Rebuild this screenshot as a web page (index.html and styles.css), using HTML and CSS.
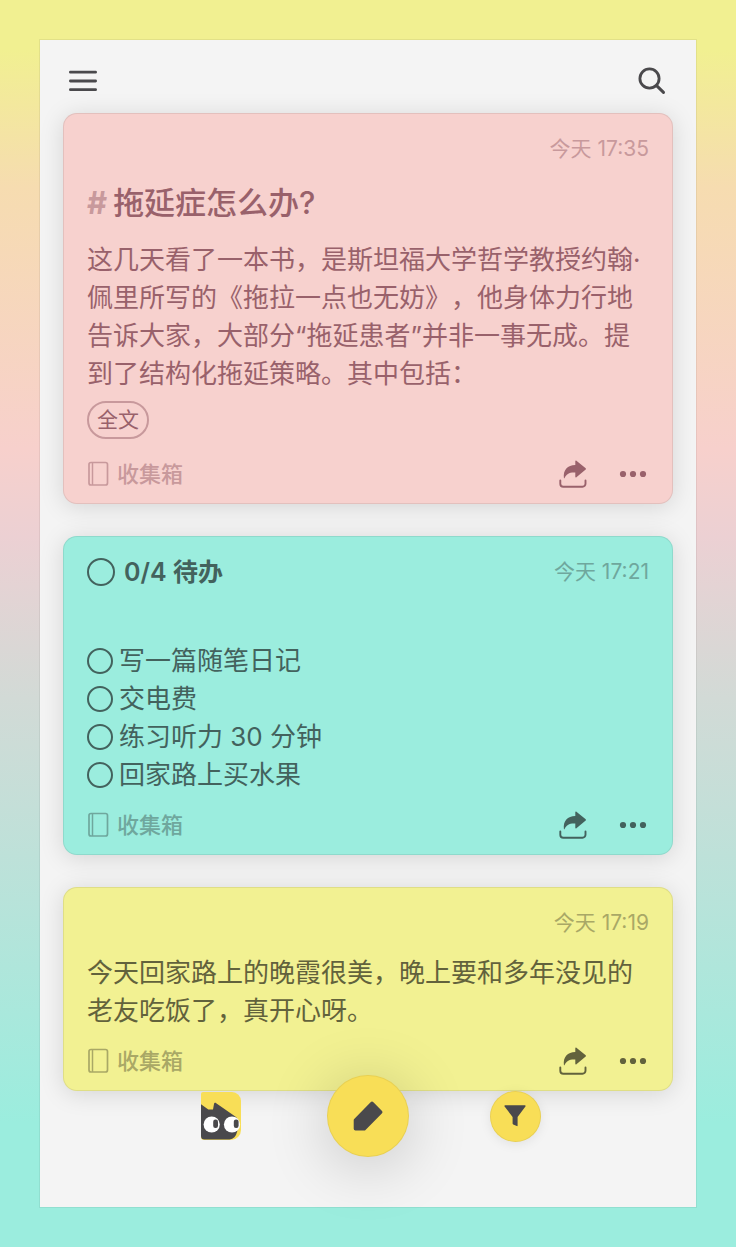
FILE: index.html
```html
<!DOCTYPE html>
<html lang="zh-CN">
<head>
    <meta charset="UTF-8">
    <meta name="viewport" content="width=device-width, initial-scale=1.0">
    <title>收集箱</title>
    <link rel="stylesheet" href="styles.css">
</head>
<body>
    <!-- 公用图标 -->
    <svg class="sprite" aria-hidden="true">
        <symbol id="icon-book" viewBox="0 0 22 26">
            <rect x="2" y="1.500" width="18.500" height="22.500" rx="2" fill="none" stroke="currentColor" stroke-width="1.700"/>
            <path d="M5.500 1.500v22.500" fill="none" stroke="currentColor" stroke-width="1.500"/>
        </symbol>
        <symbol id="icon-share" viewBox="0 0 28 28">
            <path d="M16.300 1.300c0-.7.6-.9 1.100-.5l9.300 7.400c.4.4.4.9 0 1.300l-9.300 7.800c-.5.4-1.100.2-1.100-.5V12.500C10.500 12.100 7.300 14 5.600 18.100c-.2.4-.6.3-.7-.1C4 10 8.500 5.100 16.300 5z" fill="currentColor"/>
            <path d="M1.300 20.500v3.300a3 3 0 0 0 3 3h19.200a3 3 0 0 0 3-3v-3.300" fill="none" stroke="currentColor" stroke-width="1.900" stroke-linecap="round"/>
        </symbol>
        <symbol id="icon-more" viewBox="0 0 28 28">
            <circle cx="4" cy="14" r="3.100" fill="currentColor"/>
            <circle cx="14" cy="14" r="3.100" fill="currentColor"/>
            <circle cx="24" cy="14" r="3.100" fill="currentColor"/>
        </symbol>
    </svg>

    <div class="app">
        <header class="topbar">
            <button class="icon-btn" type="button" aria-label="菜单">
                <svg width="28" height="28" viewBox="0 0 28 28">
                    <path d="M1.400 5.200h25.200M1.400 14h25.200M1.400 22.700h25.200" fill="none" stroke="currentColor" stroke-width="2.800" stroke-linecap="round"/>
                </svg>
            </button>
            <button class="icon-btn" type="button" aria-label="搜索">
                <svg width="28" height="28" viewBox="0 0 28 28">
                    <circle cx="11.500" cy="11.500" r="9.600" fill="none" stroke="currentColor" stroke-width="2.800"/>
                    <path d="M18.600 18.700l6.900 6.700" fill="none" stroke="currentColor" stroke-width="3" stroke-linecap="round"/>
                </svg>
            </button>
        </header>

        <main class="notes">
            <article class="card pink">
                <div class="card-head">
                    <time class="time">今天 17:35</time>
                </div>
                <h2 class="title"><span class="hash">#</span>拖延症怎么办?</h2>
                <p class="text">这几天看了一本书，是斯坦福大学哲学教授约翰·佩里所写的《拖拉一点也无妨》，他身体力行地告诉大家，大部分“拖延患者”并非一事无成。提到了结构化拖延策略。其中包括：</p>
                <button class="full-btn" type="button">全文</button>
                <footer class="card-foot">
                    <a class="box" href="#"><svg width="22" height="26"><use href="#icon-book"/></svg>收集箱</a>
                    <div class="actions">
                        <button class="icon-btn" type="button" aria-label="分享"><svg width="28" height="28"><use href="#icon-share"/></svg></button>
                        <button class="icon-btn" type="button" aria-label="更多"><svg width="28" height="28"><use href="#icon-more"/></svg></button>
                    </div>
                </footer>
            </article>

            <article class="card teal">
                <div class="card-head">
                    <label class="todo-count"><input type="checkbox">0/4 待办</label>
                    <time class="time">今天 17:21</time>
                </div>
                <ul class="todos">
                    <li><label><input type="checkbox">写一篇随笔日记</label></li>
                    <li><label><input type="checkbox">交电费</label></li>
                    <li><label><input type="checkbox">练习听力 30 分钟</label></li>
                    <li><label><input type="checkbox">回家路上买水果</label></li>
                </ul>
                <footer class="card-foot">
                    <a class="box" href="#"><svg width="22" height="26"><use href="#icon-book"/></svg>收集箱</a>
                    <div class="actions">
                        <button class="icon-btn" type="button" aria-label="分享"><svg width="28" height="28"><use href="#icon-share"/></svg></button>
                        <button class="icon-btn" type="button" aria-label="更多"><svg width="28" height="28"><use href="#icon-more"/></svg></button>
                    </div>
                </footer>
            </article>

            <article class="card yellow">
                <div class="card-head">
                    <time class="time">今天 17:19</time>
                </div>
                <p class="text">今天回家路上的晚霞很美，晚上要和多年没见的老友吃饭了，真开心呀。</p>
                <footer class="card-foot">
                    <a class="box" href="#"><svg width="22" height="26"><use href="#icon-book"/></svg>收集箱</a>
                    <div class="actions">
                        <button class="icon-btn" type="button" aria-label="分享"><svg width="28" height="28"><use href="#icon-share"/></svg></button>
                        <button class="icon-btn" type="button" aria-label="更多"><svg width="28" height="28"><use href="#icon-more"/></svg></button>
                    </div>
                </footer>
            </article>
        </main>

        <nav class="tabbar">
            <button class="logo-btn" type="button" aria-label="主页">
                <svg width="40" height="48" viewBox="0 0 40 48">
                    <path d="M2 0h29a9 9 0 0 1 9 9v29a10 10 0 0 1-10 10H3a3 3 0 0 1-3-3V2a2 2 0 0 1 2-2z" fill="#f8de57"/>
                    <path d="M0 12.200l7.300 5.300H12l1-5.500c.2-1.200 1.300-1.400 2.200-.8L35 25c2.500 3 3.500 6 2.800 9.500L36 40c-1 4.500-3.500 7-7.500 7.500H3.500A3.500 3.500 0 0 1 0 44z" fill="#4a494c"/>
                    <circle cx="10.700" cy="32.500" r="8.100" fill="#fff"/>
                    <circle cx="31" cy="32.500" r="8.100" fill="#fff"/>
                    <rect x="12.200" y="27.600" width="4.800" height="8.400" rx="2.200" fill="#4a494c"/>
                    <rect x="32.800" y="27.600" width="4.800" height="8.400" rx="2.200" fill="#4a494c"/>
                </svg>
            </button>
            <button class="round-btn write" type="button" aria-label="写笔记">
                <svg width="30" height="30" viewBox="0 0 30 30">
                    <path d="M17.600 1.200a2 2 0 0 1 2.800 0l8.400 8.500a2 2 0 0 1 0 2.800L12.500 29a1.700 1.700 0 0 1-1.200.6H2.500A1.800 1.800 0 0 1 .7 27.800v-8.600a2 2 0 0 1 .5-1.300z" fill="currentColor"/>
                </svg>
            </button>
            <button class="round-btn" type="button" aria-label="筛选">
                <svg width="22" height="22" viewBox="0 0 22 22">
                    <path d="M1.200.3h19.600c.8 0 1.100.6.6 1.200L13.600 12v8.600c0 .5-.3.700-.8.5l-3.600-1.600a1 1 0 0 1-.6-.9V12L.6 1.500C.1.900.4.3 1.200.3z" fill="currentColor"/>
                </svg>
            </button>
        </nav>
    </div>
</body>
</html>
```

FILE: styles.css
```css
* {
    margin: 0;
    padding: 0;
    box-sizing: border-box;
}

body {
    min-height: 100vh;
    padding: 40px;
    font-family: Inter, "Noto Sans CJK SC", sans-serif;
    text-spacing-trim: space-all;
    background: linear-gradient(180deg, #f1f091 0%, #f1f091 4%, #f6dcb0 15%, #f7d0cc 36%, #ecd0d3 43%, #d2dad6 56%, #9bedde 90%);
}

button {
    border: none;
    background: none;
    color: inherit;
    font: inherit;
    cursor: pointer;
}

svg {
    display: block;
}

.sprite {
    position: absolute;
    width: 0;
    height: 0;
}

.app {
    background: #f4f4f4;
    color: #4a494c;
    box-shadow: 0 0 0 1px rgba(0, 0, 0, 0.06);
}

.topbar {
    display: flex;
    justify-content: space-between;
    padding: 27px 30px 18px 29px;
}

/* 卡片 */
.notes {
    display: flex;
    flex-direction: column;
    gap: 32px;
    padding: 0 23px;
}

.card {
    padding: 23px 23px 14px;
    border: 1px solid rgba(0, 0, 0, 0.08);
    border-radius: 14px;
    color: var(--ink);
    background: var(--bg);
    box-shadow: 0 3px 24px rgba(0, 0, 0, 0.13);
}

.pink {
    --bg: #f7d1ce;
    --ink: #99616b;
    --muted: #c8999c;
}

.teal {
    --bg: #9bedde;
    --ink: #43625d;
    --muted: #6fa79d;
}

.yellow {
    --bg: #f2f192;
    --ink: #62623c;
    --muted: #a9a866;
}

.card-head {
    display: flex;
    align-items: center;
    height: 24px;
}

.time {
    margin-left: auto;
    color: var(--muted);
    font-size: 21px;
    line-height: 24px;
}

.title {
    margin: 22px 0 18px;
    font-size: 31px;
    font-weight: 500;
    line-height: 40px;
}

.hash {
    margin-right: 6px;
    color: var(--muted);
    font-weight: 700;
}

.text {
    font-size: 26px;
    line-height: 38px;
}

.yellow .text {
    margin-top: 19px;
}

.full-btn {
    display: block;
    height: 38px;
    margin: 8px 0 20px;
    padding: 0 8px;
    border: 2px solid var(--muted);
    border-radius: 19px;
    font-size: 21px;
    line-height: 34px;
}

.card-foot {
    display: flex;
    align-items: center;
    justify-content: space-between;
    height: 30px;
    margin-top: 16px;
}

.box {
    display: flex;
    align-items: center;
    gap: 8px;
    color: var(--muted);
    font-size: 22px;
    font-weight: 500;
    line-height: 30px;
    text-decoration: none;
}

.actions {
    display: flex;
    gap: 32px;
    margin-right: 2px;
}

/* 待办 */
input[type="checkbox"] {
    appearance: none;
    flex: none;
    width: 26px;
    height: 26px;
    border: 2px solid var(--ink);
    border-radius: 50%;
}

.todo-count {
    display: flex;
    align-items: center;
    gap: 9px;
    font-size: 25px;
    font-weight: 600;
    line-height: 24px;
}

.todo-count input[type="checkbox"] {
    width: 28px;
    height: 28px;
}

.todos {
    margin-top: 58px;
    list-style: none;
}

.todos label {
    display: flex;
    align-items: center;
    gap: 6px;
    font-size: 26px;
    line-height: 38px;
}

/* 底部悬浮按钮 */
.tabbar {
    position: relative;
    display: grid;
    grid-template-columns: repeat(3, 147px);
    justify-content: center;
    place-items: center;
    margin-top: -16px;
    padding-bottom: 50px;
}

.round-btn {
    display: grid;
    place-items: center;
    width: 51px;
    height: 51px;
    border: 1px solid rgba(0, 0, 0, 0.06);
    border-radius: 50%;
    background: #f8de57;
    box-shadow: 0 2px 12px rgba(0, 0, 0, 0.08);
}

.write {
    width: 82px;
    height: 82px;
    box-shadow: 0 8px 64px rgba(0, 0, 0, 0.2);
}
```
